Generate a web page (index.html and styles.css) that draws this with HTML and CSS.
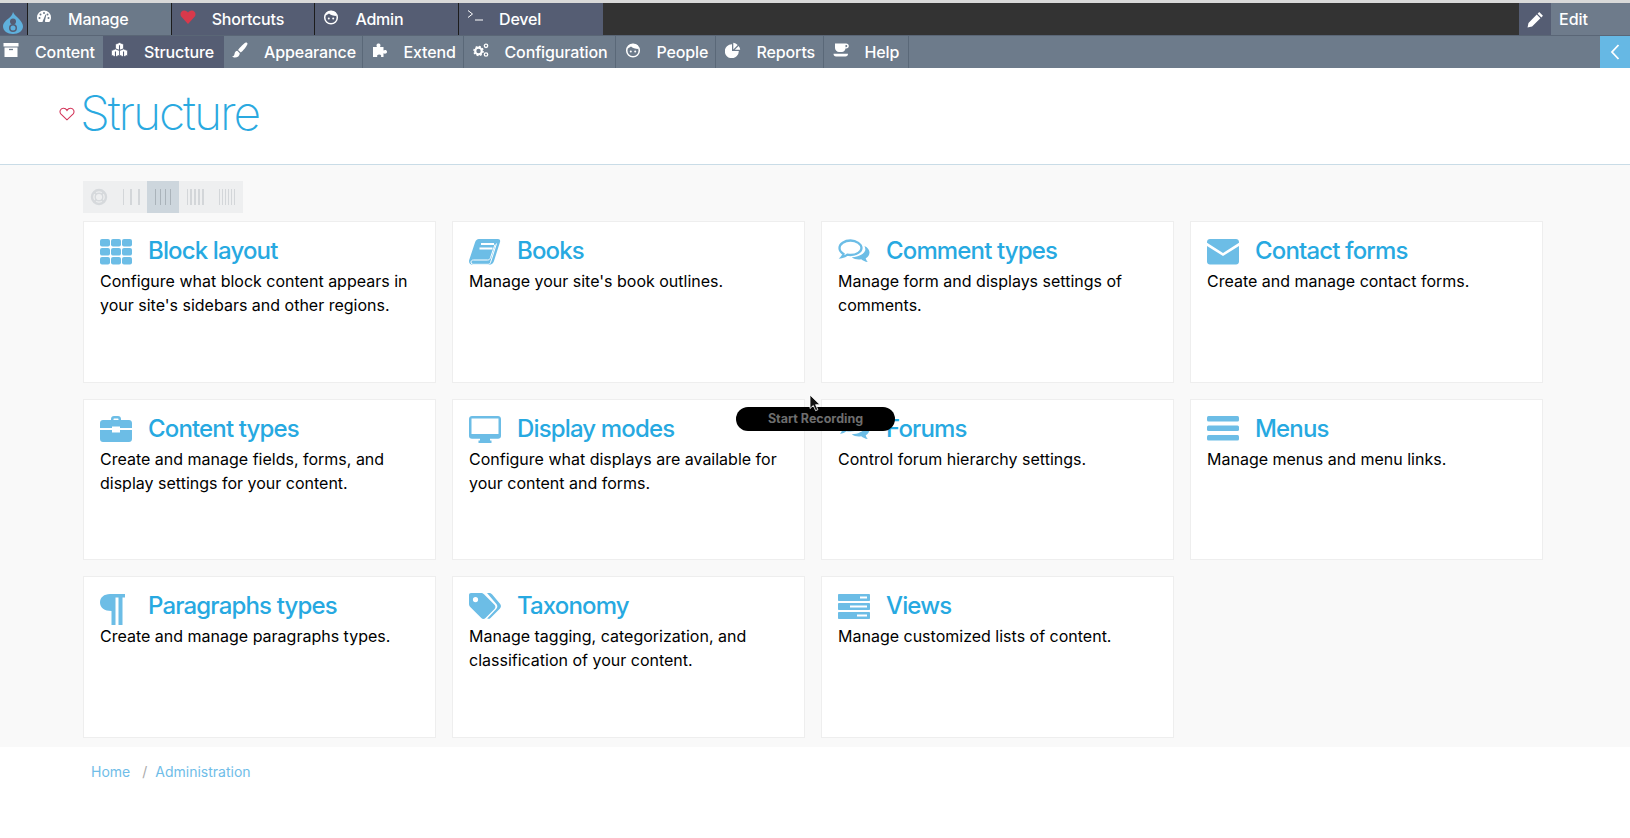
FILE: index.html
```html
<!DOCTYPE html>
<html lang="en">
<head>
<meta charset="utf-8">
<title>Structure</title>
<link rel="stylesheet" href="styles.css">
</head>
<body>
<header class="admin">
  <div class="bar-top">
    <a class="logo"><svg viewBox="0 0 20 22" class="logo-svg"><path d="M10 0c1 3 4 4.500 6.500 7.500C18.500 10 20 12 20 14.500 20 19 15.500 22 10 22S0 19 0 14.500C0 11 3 8.500 5.500 6.500 7.500 5 9.500 3 10 0z" fill="#5fb0dc"/><circle cx="10" cy="9.500" r="3" fill="#555d73"/><circle cx="10" cy="16" r="4" fill="#555d73"/><circle cx="10" cy="16" r="2.500" fill="#5fb0dc"/></svg></a>
    <a class="tab tab-light"><svg class="ico" viewBox="0 0 16 16"><path d="M8 1.500a7 7 0 0 0-7 7c0 1.800.6 3.200 1.700 4.500h10.600C14.400 11.700 15 10.300 15 8.500a7 7 0 0 0-7-7z" fill="#fff"/><g fill="#6b7989"><circle cx="8" cy="4" r="1"/><circle cx="4.500" cy="5.500" r="1"/><circle cx="3.500" cy="9" r="1"/><circle cx="12.500" cy="9" r="1"/><circle cx="11.500" cy="5.500" r="1"/><path d="M7 11.500L9.500 5.500l.8.3L9 11.800a1.300 1.300 0 1 1-2 -.3z"/></g></svg><span>Manage</span></a>
    <a class="tab"><svg class="ico" viewBox="0 0 16 16"><path d="M8 15L1.200 7.500C-.5 5 1 1.500 4.200 1.500 6 1.500 7.300 2.500 8 3.500c.7-1 2-2 3.800-2C15 1.500 16.500 5 14.800 7.500z" fill="#d8394b"/></svg><span>Shortcuts</span></a>
    <a class="tab"><svg class="ico" viewBox="0 0 16 16"><circle cx="8" cy="8.500" r="6.300" fill="none" stroke="#fff" stroke-width="1.500"/><path d="M2.500 7C4 5.500 5 5 6 4.500c1.500 1.500 4 2.300 7.500 2.500L12.500 3 8 1.800 4 3z" fill="#fff"/><circle cx="5.800" cy="9.500" r="1" fill="#fff"/><circle cx="10.200" cy="9.500" r="1" fill="#fff"/></svg><span>Admin</span></a>
    <a class="tab tab-end"><svg class="ico" viewBox="0 0 16 16"><path d="M1 1.500L5.500 5 1 8.500M8 11h8" fill="none" stroke="#fff" stroke-width="1"/></svg><span>Devel</span></a>
    <div class="bar-fill"></div>
    <a class="edit-ico"><svg class="ico-lg" viewBox="0 0 16 16"><path d="M11.500 1l3.500 3.500-1.500 1.500L10 2.500zM9.200 3.400l3.400 3.400-7.800 7.800L.5 15.500l.9-4.300z" fill="#fff"/></svg></a>
    <a class="edit-label">Edit</a>
  </div>
  <div class="bar-nav">
    <nav class="nav-grid">
      <a class="nav-item nav-first"><svg class="ico" viewBox="0 0 16 16"><path d="M.5 1h15v3.500H.5zM1.500 5.500h13V15h-13z" fill="#fff"/><path d="M6 7.500h4" stroke="#6d7b8b" stroke-width="1.300"/></svg><span>Content</span></a>
      <a class="nav-item nav-active"><svg class="ico-lg" viewBox="0 0 16 16"><g fill="#fff" stroke="#555d73" stroke-width=".7"><path d="M8 .5l3.800 1.600v4.300L8 8 4.200 6.400V2.100z"/><path d="M4.200 6.500l3.800 1.600v4.300l-3.800 1.600L.4 12.400V8.100z"/><path d="M11.800 6.500l3.800 1.600v4.300l-3.800 1.600L8 12.400V8.100z"/></g><path d="M8 3v5M4.200 9v5M11.800 9v5" stroke="#555d73" stroke-width="1"/></svg><span>Structure</span></a>
      <a class="nav-item"><svg class="ico" viewBox="0 0 16 16"><path d="M14 .5c1 0 1.700.7 1.500 1.500C14.500 4.500 11 9 8.800 10.500L6 8C8 5.500 12 1 14 .5zM5.300 8.800l2.500 2.400C7.700 14 5.500 15.500 3 15.500c-1 0-2.300-.4-3-1.200 1.500 0 2.300-.8 2.500-2.300.2-1.800 1.300-3 2.800-3.200z" fill="#fff"/></svg><span>Appearance</span></a>
      <a class="nav-item"><svg class="ico" viewBox="0 0 16 16"><path d="M1 5h4c-.8-1-.8-3.500 1.500-3.500S8.800 4 8 5h3.500v3.500c1-.8 3.500-.8 3.500 1.300S12.500 12.200 11.500 11.300V15H9c.6-1.300 0-2.500-1.800-2.500S4.700 13.700 5.300 15H1z" fill="#fff"/></svg><span>Extend</span></a>
      <a class="nav-item"><svg class="ico" viewBox="0 0 16 16"><circle cx="5.500" cy="9" r="3.300" fill="none" stroke="#fff" stroke-width="2.200"/><circle cx="5.500" cy="9" r="4.600" fill="none" stroke="#fff" stroke-width="1.400" stroke-dasharray="1.800 1.800"/><circle cx="13" cy="3.800" r="1.700" fill="none" stroke="#fff" stroke-width="1.300"/><circle cx="13" cy="12.500" r="1.700" fill="none" stroke="#fff" stroke-width="1.300"/></svg><span>Configuration</span></a>
      <a class="nav-item"><svg class="ico" viewBox="0 0 16 16"><circle cx="8" cy="8.500" r="6.300" fill="none" stroke="#fff" stroke-width="1.500"/><path d="M2.500 7C4 5.500 5 5 6 4.500c1.500 1.500 4 2.300 7.500 2.500L12.500 3 8 1.800 4 3z" fill="#fff"/><circle cx="5.800" cy="9.500" r="1" fill="#fff"/><circle cx="10.200" cy="9.500" r="1" fill="#fff"/></svg><span>People</span></a>
      <a class="nav-item"><svg class="ico" viewBox="0 0 16 16"><path d="M7 2.200V9h6.800A7 7 0 1 1 7 2.200z" fill="#fff"/><path d="M8.300 .8A7 7 0 0 1 12.700 3L8.300 7.400zM13.600 4a7 7 0 0 1 1.600 3.800H9.800z" fill="#fff"/></svg><span>Reports</span></a>
      <a class="nav-item"><svg class="ico" viewBox="0 0 16 16"><path d="M2 1.500h11c1.800 0 2.800 1 2.800 2.500s-1 2.500-2.800 2.500h-.5c-.4 2-1.800 3.500-3.500 3.500H6C4 10 2 8 2 6zM12.500 3v2.200h.5c.8 0 1.300-.4 1.300-1.100S13.800 3 13 3z" fill="#fff"/><path d="M.5 11.800h14.500c0 1.700-1 2.700-2.500 2.700H3c-1.500 0-2.500-1-2.500-2.700z" fill="#fff"/></svg><span>Help</span></a>
    </nav>
    <div class="nav-fill"></div>
    <a class="collapse"><svg class="chev" viewBox="0 0 10 18"><path d="M8.500 2L2 9l6.500 7" fill="none" stroke="#fff" stroke-width="1.800"/></svg></a>
  </div>
</header>

<section class="page-head">
  <svg class="fav" viewBox="0 0 16 14"><path d="M8 12.800L1.800 6.800C.2 5 1.200 1.400 4.200 1.200 6 1.100 7.300 2.200 8 3.400c.7-1.200 2-2.300 3.800-2.200 3 .2 4 3.800 2.400 5.600z" fill="none" stroke="#d3365a" stroke-width="1.100"/></svg>
  <h1 class="page-title">Structure</h1>
</section>

<main class="content">
  <div class="switcher">
    <a class="sw"><svg class="sw-ico" viewBox="0 0 18 18"><circle cx="9" cy="9" r="7" fill="none" stroke="#d6d9dc" stroke-width="2.400"/><circle cx="9" cy="9" r="3.800" fill="none" stroke="#d6d9dc" stroke-width="1.400"/><path d="M4 4l2.500 2.500M14 4l-2.500 2.500M4 14l2.500-2.500M14 14l-2.500-2.500" stroke="#d6d9dc" stroke-width="2"/></svg></a>
    <a class="sw"><span class="cols cols-3"><i></i><i></i><i></i></span></a>
    <a class="sw sw-active"><span class="cols cols-4"><i></i><i></i><i></i><i></i></span></a>
    <a class="sw"><span class="cols cols-5"><i></i><i></i><i></i><i></i><i></i></span></a>
    <a class="sw"><span class="cols cols-6"><i></i><i></i><i></i><i></i><i></i><i></i></span></a>
  </div>

  <div class="cards">
    <article class="card">
      <h2 class="card-head"><svg class="card-ico" viewBox="0 0 32 32"><g fill="#6cbde6"><rect x="0" y="4" width="10" height="7.500" rx="2"/><rect x="11" y="4" width="10" height="7.500" rx="2"/><rect x="22" y="4" width="10" height="7.500" rx="2"/><rect x="0" y="13" width="10" height="7.500" rx="2"/><rect x="11" y="13" width="10" height="7.500" rx="2"/><rect x="22" y="13" width="10" height="7.500" rx="2"/><rect x="0" y="22" width="10" height="7.500" rx="2"/><rect x="11" y="22" width="10" height="7.500" rx="2"/><rect x="22" y="22" width="10" height="7.500" rx="2"/></g></svg>Block layout</h2>
      <p class="card-text">Configure what block content appears in your site's sidebars and other regions.</p>
    </article>
    <article class="card">
      <h2 class="card-head"><svg class="card-ico" viewBox="0 0 32 32"><path d="M10 4h19c1.800 0 2.500 1.300 2 3l-6 19c-.7 2.300-2.300 3.800-5 3.800H3.500C1 29.800-.5 27.500.2 25L6 7.500C6.700 5.300 8 4 10 4z" fill="#6cbde6"/><path d="M12 9h13M10.500 13.500h13" stroke="#fff" stroke-width="2"/><path d="M27.500 8.500l-6 19c-.5 1.200-1 1.800-2.500 1.800H4c-2 0-2.500-2.500-1.500-3.500.5-.6 1-.8 2-.8h14c1.500 0 2.400-.7 3-2.300L26 9.500" fill="none" stroke="#fff" stroke-width="1"/></svg>Books</h2>
      <p class="card-text">Manage your site's book outlines.</p>
    </article>
    <article class="card">
      <h2 class="card-head"><svg class="card-ico" viewBox="0 0 32 32"><path d="M12.500 5.500c-6 0-11 3.300-11 7.500 0 2.400 1.600 4.500 4 5.900-.3 1.200-.9 2.300-1.800 3.300 2.200-.3 4.200-1.200 5.700-2.500 1 .2 2 .3 3.100.3 6 0 11-3.400 11-7s-5-7.500-11-7.500z" fill="none" stroke="#6cbde6" stroke-width="2.300"/><path d="M26.500 11c3.400 1.500 5 4 5 6.500s-1.500 4.500-3.800 5.800c.3 1.500 1 2.700 2 3.700-2.500-.3-4.700-1.300-6.500-2.800-3.500.6-7-.1-9.500-2 6 0 12-2.700 13.500-6.700.4-1.400-.1-3-.7-4.500z" fill="#6cbde6"/></svg>Comment types</h2>
      <p class="card-text">Manage form and displays settings of comments.</p>
    </article>
    <article class="card">
      <h2 class="card-head"><svg class="card-ico" viewBox="0 0 32 32"><path d="M3 4h26c1.700 0 3 1.300 3 3v.8L16 18 0 7.800V7c0-1.700 1.300-3 3-3zM0 11l16 10 16-10v15.500c0 1.700-1.300 3-3 3H3c-1.700 0-3-1.300-3-3z" fill="#6cbde6"/></svg>Contact forms</h2>
      <p class="card-text">Create and manage contact forms.</p>
    </article>

    <article class="card">
      <h2 class="card-head"><svg class="card-ico" viewBox="0 0 32 32"><path d="M11 7c0-1.800 1.200-3 3-3h4c1.800 0 3 1.200 3 3v1h8c1.700 0 3 1.300 3 3v5H20v-1.500h-8V16H0v-5c0-1.700 1.300-3 3-3h8zm2.500 0v1h5V7c0-.4-.2-.6-.6-.6h-3.800c-.4 0-.6.2-.6.6zM0 18h12v2.500h8V18h12v9c0 1.700-1.300 3-3 3H3c-1.700 0-3-1.300-3-3z" fill="#6cbde6"/></svg>Content types</h2>
      <p class="card-text">Create and manage fields, forms, and display settings for your content.</p>
    </article>
    <article class="card">
      <h2 class="card-head"><svg class="card-ico" viewBox="0 0 32 32"><path d="M3 4h26c1.700 0 3 1.300 3 3v17c0 1.700-1.300 2.800-3 2.800H21v1.700h1.500V31h-13v-2.500H11v-1.700H3c-1.700 0-3-1.100-3-2.800V7c0-1.700 1.300-3 3-3zm-.5 2.500V22h27V6.500z" fill="#6cbde6"/></svg>Display modes</h2>
      <p class="card-text">Configure what displays are available for your content and forms.</p>
    </article>
    <article class="card">
      <h2 class="card-head"><svg class="card-ico" viewBox="0 0 32 32"><path d="M12 5c-6.500 0-12 3.300-12 7.500 0 2.400 1.700 4.500 4 5.900-.3 1.200-1 2.300-2 3.300 2.500-.3 4.700-1.200 6.300-2.500 1.200.2 2.400.3 3.700.3 6.500 0 12-3.400 12-7s-5.500-7.500-12-7.500z" fill="#6cbde6"/><path d="M26.500 11c3.400 1.500 5 4 5 6.500s-1.500 4.500-3.800 5.800c.3 1.500 1 2.700 2 3.700-2.500-.3-4.700-1.300-6.500-2.800-3.500.6-7-.1-9.500-2 6 0 12-2.700 13.500-6.700.4-1.400-.1-3-.7-4.500z" fill="#6cbde6"/></svg>Forums</h2>
      <p class="card-text">Control forum hierarchy settings.</p>
    </article>
    <article class="card">
      <h2 class="card-head"><svg class="card-ico" viewBox="0 0 32 32"><g fill="#6cbde6"><rect x="0" y="4" width="32" height="5.500" rx="1.500"/><rect x="0" y="13.500" width="32" height="5.500" rx="1.500"/><rect x="0" y="23" width="32" height="5.500" rx="1.500"/></g></svg>Menus</h2>
      <p class="card-text">Manage menus and menu links.</p>
    </article>

    <article class="card">
      <h2 class="card-head"><svg class="card-ico" viewBox="0 0 32 32"><path d="M10 4h15v3.500h-2.500V35h-4V7.500h-3V35H11.500V21C4.500 21 0 17.500 0 12.500S4 4 10 4z" fill="#6cbde6"/></svg>Paragraphs types</h2>
      <p class="card-text">Create and manage paragraphs types.</p>
    </article>
    <article class="card">
      <h2 class="card-head"><svg class="card-ico" viewBox="0 0 32 32"><path d="M2 3h10c1.200 0 2 .4 3 1.300l10.500 10.500c1.200 1.200 1.200 3 0 4.200l-9 9c-1.200 1.200-3 1.200-4.200 0L1.500 17.200C.5 16.200 0 15.200 0 14V5c0-1.200.8-2 2-2zm4.500 4A2.600 2.600 0 1 0 6.500 12.200 2.600 2.600 0 0 0 6.500 7z" fill="#6cbde6"/><path d="M18 3h2c1.200 0 2 .4 3 1.300l8 9.500c1.300 1.500 1.300 3.300 0 4.700L21.500 28c-1 1-2.200 1.100-3.300.5l9-9.500c1.500-1.600 1.500-3.600 0-5.200z" fill="#6cbde6"/></svg>Taxonomy</h2>
      <p class="card-text">Manage tagging, categorization, and classification of your content.</p>
    </article>
    <article class="card">
      <h2 class="card-head"><svg class="card-ico" viewBox="0 0 32 32"><g fill="#6cbde6"><rect x="0" y="4" width="32" height="7" rx=".8"/><rect x="0" y="13" width="32" height="7" rx=".8"/><rect x="0" y="22" width="32" height="7" rx=".8"/></g><path d="M22 7.500h7M12 16.500h17M19 25.500h10" stroke="#fff" stroke-width="1.800"/></svg>Views</h2>
      <p class="card-text">Manage customized lists of content.</p>
    </article>
  </div>
</main>

<footer class="crumbs">
  <a class="crumb">Home</a><span class="crumb-sep">/</span><a class="crumb">Administration</a>
</footer>

<div class="rec-pill">Start Recording</div>
<svg class="cursor" viewBox="0 0 12 18"><path d="M1 1v13.500l3.300-3 2.300 5.200 2.300-1-2.300-5h4.400z" fill="#111" stroke="#fff" stroke-width=".8"/></svg>
</body>
</html>
```

FILE: styles.css
```css
* { box-sizing: border-box; }
html, body { margin: 0; padding: 0; }
body {
  background: #fff;
  color: #000;
  font-family: Inter, "Liberation Sans", sans-serif;
  font-size: 16px;
  height: 838px;
  overflow: hidden;
  position: relative;
}
a { color: inherit; text-decoration: none; }

.admin { padding-top: 3px; background: #d9d9d9; }

.bar-top {
  display: flex;
  height: 32px;
  background: #333;
  color: #fff;
  font-weight: 500;
}
.logo {
  flex: 0 0 28px;
  background: #555d73;
  border-right: 1px solid #1c1c1c;
  display: flex;
  align-items: center;
  padding-left: 3px;
}
.logo-svg { width: 20px; height: 22px; margin-top: 8px; }
.ico { width: 16px; height: 16px; flex: none; margin-top: -4px; }
.ico-lg { width: 17px; height: 17px; flex: none; margin: -3px -1px 0 0; }
.tab {
  flex: 0 0 143.700px;
  display: flex;
  align-items: center;
  gap: 16px;
  padding-left: 8px;
  background: #555d73;
  border-right: 1px solid #1c1c1c;
  letter-spacing: -0.2px;
}
.tab-light { background: #6b7989; }
.tab-end { border-right: 0; }
.bar-fill { flex: 1; }
.edit-ico {
  flex: 0 0 32px;
  background: #555d73;
  display: flex;
  align-items: center;
  justify-content: center;
}
.edit-ico .ico-lg { margin: 0; }
.edit-label {
  flex: 0 0 79px;
  background: #6e7b8b;
  display: flex;
  align-items: center;
  padding-left: 8px;
}

.bar-nav {
  display: flex;
  height: 33px;
  border-top: 1px solid #5a6676;
  background: #6d7b8b;
  color: #fff;
  font-weight: 500;
}
.nav-grid {
  display: grid;
  grid-template-columns: 103px 121px 139px 101px 152px 100px 108px 85px;
}
.nav-item {
  display: flex;
  align-items: center;
  gap: 16px;
  padding-left: 8px;
  border-right: 1px solid #5a6878;
  letter-spacing: -0.13px;
  white-space: nowrap;
}
.nav-item:nth-child(n+4) { padding-left: 8.500px; }
.nav-first { padding-left: 3px; border-right: 0; }
.nav-active { background: #555d73; border-right: 0; }
.nav-active span { margin-left: 1px; }
.nav-fill { flex: 1; }
.collapse {
  flex: 0 0 30px;
  background: #66b8e4;
  display: flex;
  align-items: center;
  justify-content: center;
}
.chev { width: 10px; height: 18px; }

.page-head {
  height: 97px;
  border-bottom: 1px solid #c9dce7;
  display: flex;
  align-items: center;
  padding: 0 0 4px 59px;
  gap: 5px;
}
.fav { width: 16px; height: 14px; flex: none; }
.page-title {
  margin: 0 0 2px;
  font-size: 48px;
  line-height: 56px;
  font-weight: 200;
  letter-spacing: -2.1px;
  color: #2aa9e0;
}

.content {
  height: 582px;
  background: #f9f9f9;
  padding: 16px 0 0 83px;
}
.switcher { display: flex; height: 32px; }
.sw {
  width: 32px;
  background: #eeeff0;
  display: flex;
  align-items: center;
  justify-content: center;
}
.sw-active { background: #cdd6dd; }
.sw-ico { width: 18px; height: 18px; }
.cols { display: flex; justify-content: space-between; width: 17px; height: 16px; }
.cols i { width: 1.500px; background: #d3d6d9; }
.sw-active .cols i { background: #aab3ba; }

.cards {
  display: grid;
  grid-template-columns: repeat(4, 353px);
  grid-auto-rows: 161.500px;
  gap: 16px;
  margin-top: 8px;
}
.card {
  background: #fff;
  border: 1px solid #eeeeee;
  padding: 12.500px 16px 0;
}
.card-head {
  display: flex;
  align-items: center;
  height: 32px;
  margin: 0 0 2.500px;
  font-size: 24px;
  font-weight: 500;
  letter-spacing: -0.85px;
  color: #27a9e1;
  white-space: nowrap;
}
.card-ico { width: 32px; height: 32px; flex: none; margin-right: 16px; overflow: visible; }
.card-text {
  margin: 0;
  font-size: 16px;
  line-height: 24px;
  color: #000;
}

.crumbs {
  padding: 16px 0 0 91px;
  font-size: 14px;
  line-height: 18px;
  color: #6fbde8;
}
.crumb-sep { color: #aaa; margin: 0 8px 0 12px; }

.rec-pill {
  position: absolute;
  left: 736px;
  top: 407px;
  width: 159px;
  height: 24px;
  border-radius: 12px;
  background: #000;
  color: #6e6e6e;
  font-size: 12.500px;
  font-weight: 700;
  line-height: 24px;
  text-align: center;
}
.cursor {
  position: absolute;
  left: 809px;
  top: 394px;
  width: 12px;
  height: 18px;
}
```
